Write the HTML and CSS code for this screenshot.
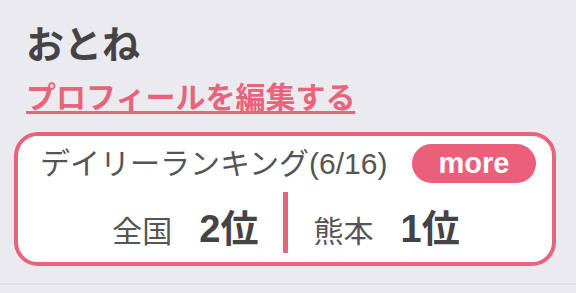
FILE: index.html
```html
<!DOCTYPE html>
<html lang="ja">
<head>
    <meta charset="UTF-8">
    <meta name="viewport" content="width=device-width, initial-scale=1.0">
    <title>おとね</title>
    <link rel="stylesheet" href="styles.css">
</head>
<body>
    <div class="profile">
        <h1 class="name">おとね</h1>
        <a class="edit" href="#">プロフィールを編集する</a>
        <div class="ranking">
            <div class="ranking-head">
                <span class="ranking-title">デイリーランキング(6/16)</span>
                <a class="more" href="#">more</a>
            </div>
            <div class="ranking-body">
                <div class="rank">
                    <span class="area">全国</span>
                    <span class="pos">2位</span>
                </div>
                <div class="sep"></div>
                <div class="rank">
                    <span class="area">熊本</span>
                    <span class="pos">1位</span>
                </div>
            </div>
        </div>
    </div>
</body>
</html>
```

FILE: styles.css
```css
body {
    margin: 0;
    background: #ebebef;
    font-family: "Liberation Sans", "Noto Sans CJK JP", sans-serif;
    color: #555;
}
.profile {
    padding: 18px 20px 0 14px;
    height: 265px;
    border-bottom: 2px solid #dedee2;
}
.name {
    margin: 0 0 0 12px;
    font-size: 38px;
    line-height: 54px;
    font-weight: bold;
    color: #444;
}
.edit {
    display: block;
    width: max-content;
    margin: 8px 0 0 12px;
    font-size: 30px;
    line-height: 36px;
    font-weight: bold;
    color: #e8647d;
    text-decoration: underline;
    text-decoration-thickness: 3px;
    text-underline-offset: 3px;
}
.ranking {
    margin-top: 16px;
    background: #fff;
    border: 4px solid #e8647d;
    border-radius: 24px;
    height: 134px;
    box-sizing: border-box;
    padding: 8px 16px 0 22px;
}
.ranking-head {
    display: flex;
    justify-content: space-between;
    align-items: center;
}
.ranking-title {
    font-size: 30px;
    line-height: 39px;
    margin-top: -1px;
}
.more {
    width: 124px;
    height: 39px;
    border-radius: 20px;
    background: #ec5f7a;
    color: #fff;
    font-size: 29px;
    font-weight: bold;
    line-height: 38px;
    text-align: center;
    text-decoration: none;
}
.ranking-body {
    display: flex;
    justify-content: center;
    align-items: center;
    margin: 9px -16px 0 -22px;
}
.rank {
    display: flex;
    align-items: baseline;
    gap: 27px;
    padding: 6px 24px 0 26px;
}
.area {
    font-size: 30px;
}
.pos {
    font-size: 38px;
    font-weight: bold;
    color: #444;
}
.sep {
    width: 5px;
    height: 61px;
    background: #e8647d;
}
```
